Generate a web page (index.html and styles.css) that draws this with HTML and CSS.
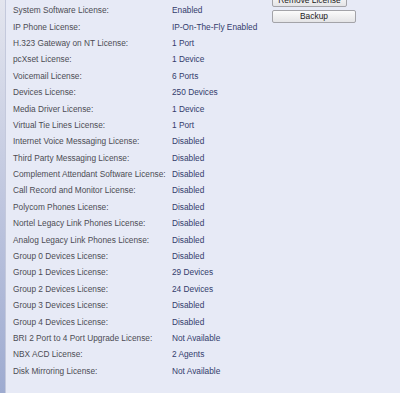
FILE: index.html
```html
<!DOCTYPE html>
<html lang="en">
<head>
   <meta charset="UTF-8">
   <title>Licenses</title>
   <link rel="stylesheet" href="styles.css">
</head>
<body>
   <div class="rail"></div>
   <div class="content">
       <div class="licenses">
           <span class="label">System Software License:</span><span class="value">Enabled</span>
           <span class="label">IP Phone License:</span><span class="value">IP-On-The-Fly Enabled</span>
           <span class="label">H.323 Gateway on NT License:</span><span class="value">1 Port</span>
           <span class="label">pcXset License:</span><span class="value">1 Device</span>
           <span class="label">Voicemail License:</span><span class="value">6 Ports</span>
           <span class="label">Devices License:</span><span class="value">250 Devices</span>
           <span class="label">Media Driver License:</span><span class="value">1 Device</span>
           <span class="label">Virtual Tie Lines License:</span><span class="value">1 Port</span>
           <span class="label">Internet Voice Messaging License:</span><span class="value">Disabled</span>
           <span class="label">Third Party Messaging License:</span><span class="value">Disabled</span>
           <span class="label">Complement Attendant Software License:</span><span class="value">Disabled</span>
           <span class="label">Call Record and Monitor License:</span><span class="value">Disabled</span>
           <span class="label">Polycom Phones License:</span><span class="value">Disabled</span>
           <span class="label">Nortel Legacy Link Phones License:</span><span class="value">Disabled</span>
           <span class="label">Analog Legacy Link Phones License:</span><span class="value">Disabled</span>
           <span class="label">Group 0 Devices License:</span><span class="value">Disabled</span>
           <span class="label">Group 1 Devices License:</span><span class="value">29 Devices</span>
           <span class="label">Group 2 Devices License:</span><span class="value">24 Devices</span>
           <span class="label">Group 3 Devices License:</span><span class="value">Disabled</span>
           <span class="label">Group 4 Devices License:</span><span class="value">Disabled</span>
           <span class="label">BRI 2 Port to 4 Port Upgrade License:</span><span class="value">Not Available</span>
           <span class="label">NBX ACD License:</span><span class="value">2 Agents</span>
           <span class="label">Disk Mirroring License:</span><span class="value">Not Available</span>
       </div>
       <div class="actions">
           <button class="btn btn-remove">Remove License</button>
           <button class="btn btn-backup">Backup</button>
       </div>
   </div>
</body>
</html>
```

FILE: styles.css
```css
html, body {
    height: 100%;
}
body {
    font-family: "Liberation Sans", Arial, sans-serif;
    font-size: 8.3px;
    background-color: #e7eaf6;
    margin: 0;
    padding: 0;
    display: flex;
    overflow: hidden;
}
.rail {
    width: 5px;
    flex-shrink: 0;
    background: linear-gradient(to bottom, #e3e5ee, #b9c1dc 60%, #9eabd0);
    border-right: 1px solid #c4c9dc;
}
.content {
    flex: 1;
    display: flex;
    padding: 2px 0 0 7px;
}
.licenses {
    display: grid;
    grid-template-columns: 159px 100px;
    grid-auto-rows: 16.4px;
    align-items: center;
    flex-shrink: 0;
    white-space: nowrap;
}
.label {
    color: #4c4c54;
}
.value {
    color: #333c6c;
}
.actions {
    display: flex;
    flex-direction: column;
    align-items: flex-start;
    gap: 3px;
    margin-top: -8px;
}
.btn {
    font-family: "Liberation Sans", Arial, sans-serif;
    font-size: 8.4px;
    color: #222;
    height: 13px;
    padding: 0;
    border: 1px solid #a3a3a8;
    border-radius: 2px;
    background: linear-gradient(to bottom, #fbfbfb, #e4e4e6);
    line-height: 11px;
}
.btn-remove {
    width: 75px;
}
.btn-backup {
    width: 84px;
}
```
